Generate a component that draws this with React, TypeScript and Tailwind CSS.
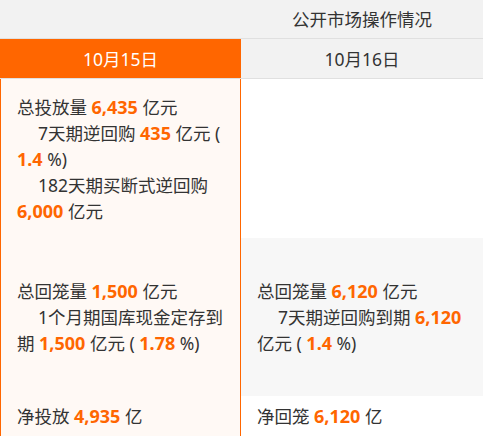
const O = ({ children }: { children: React.ReactNode }) => (
  <b className="text-[18px] font-bold text-[#ff6600]">{children}</b>
);

const Indent = () => <span className="inline-block w-[21px]" />;

const App = () => {
  return (
    <div
      className="h-[436px] w-[483px] overflow-hidden bg-white text-[17.5px] leading-[26px] text-[#333]"
      style={{ fontFamily: '"Noto Sans", "Noto Sans CJK SC", sans-serif' }}
    >
      <div className="flex h-[39px] border-b border-[#e0e0e0] bg-[#f2f2f2]">
        <div className="w-[241px]" />
        <div className="flex w-[242px] items-center justify-center">公开市场操作情况</div>
      </div>
      <div className="flex h-[40px] border-b border-[#e0e0e0] bg-[#f2f2f2]">
        <div className="flex w-[241px] items-center justify-center bg-[#ff6600] text-white">
          10月15日
        </div>
        <div className="flex w-[242px] items-center justify-center">10月16日</div>
      </div>
      <div className="flex">
        <div className="w-[241px] border-x border-[#ff6600] bg-[#fff9f5]">
          <div className="flex h-[159px] flex-col justify-center px-4">
            <p>
              总投放量 <O>6,435</O> 亿元
              <br />
              <Indent />
              7天期逆回购 <O>435</O> 亿元 ( <O>1.4</O> %)
              <br />
              <Indent />
              182天期买断式逆回购 <O>6,000</O> 亿元
            </p>
          </div>
          <div className="flex h-[158px] flex-col justify-center px-4">
            <p>
              总回笼量 <O>1,500</O> 亿元
              <br />
              <Indent />
              1个月期国库现金定存到期 <O>1,500</O> 亿元 ( <O>1.78</O> %)
            </p>
          </div>
          <div className="flex h-[40px] items-center px-4">
            <p>
              净投放 <O>4,935</O> 亿
            </p>
          </div>
        </div>
        <div className="w-[242px]">
          <div className="h-[159px]" />
          <div className="flex h-[158px] flex-col justify-center bg-[#f7f7f7] px-4">
            <p>
              总回笼量 <O>6,120</O> 亿元
              <br />
              <Indent />
              7天期逆回购到期 <O>6,120</O> 亿元 ( <O>1.4</O> %)
            </p>
          </div>
          <div className="flex h-[40px] items-center px-4">
            <p>
              净回笼 <O>6,120</O> 亿
            </p>
          </div>
        </div>
      </div>
    </div>
  );
};

export default App;
